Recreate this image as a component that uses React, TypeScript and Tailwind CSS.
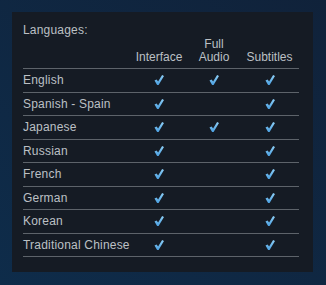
const languages: { name: string; ui: boolean; audio: boolean; subs: boolean }[] = [
  { name: 'English', ui: true, audio: true, subs: true },
  { name: 'Spanish - Spain', ui: true, audio: false, subs: true },
  { name: 'Japanese', ui: true, audio: true, subs: true },
  { name: 'Russian', ui: true, audio: false, subs: true },
  { name: 'French', ui: true, audio: false, subs: true },
  { name: 'German', ui: true, audio: false, subs: true },
  { name: 'Korean', ui: true, audio: false, subs: true },
  { name: 'Traditional Chinese', ui: true, audio: false, subs: true },
]

function Check() {
  return (
    <svg width="10" height="10" viewBox="0 0 10 10" className="block">
      <defs>
        <linearGradient id="chk" x1="0" y1="0" x2="0" y2="1">
          <stop offset="0" stopColor="#8fd0f7" />
          <stop offset="1" stopColor="#4a9fe0" />
        </linearGradient>
      </defs>
      <polygon points="0.5,5.6 2.6,4.6 4.1,6.6 8.1,0 10,0.9 4.6,10 3.1,10" fill="url(#chk)" />
    </svg>
  )
}

export default function App() {
  return (
    <div
      className="w-[326px] h-[285px] bg-gradient-to-tr from-[#0e2c4a] to-[#10223a] p-[12px] pb-[13px]"
      style={{ fontFamily: 'Arial, "Liberation Sans", sans-serif' }}
    >
      <div className="w-[301px] h-[260px] bg-[#151b24] pt-[10px] px-[11px] text-[12px] text-[#bcc0c4]">
        <div className="leading-[16px] tracking-[0.2px]">Languages:</div>
        <div className="grid grid-cols-[107px_58px_52px_59px] w-[276px]">
          <div className="border-b border-[#5d636a]" />
          <div className="border-b border-[#5d636a] flex items-end justify-center leading-[13px] pb-[4px]">Interface</div>
          <div className="border-b border-[#5d636a] flex flex-col items-center justify-end leading-[13px] pb-[4px]">
            <span>Full</span>
            <span>Audio</span>
          </div>
          <div className="border-b border-[#5d636a] flex items-end justify-center leading-[13px] pb-[4px]">Subtitles</div>
          {languages.map((l) => (
            <div key={l.name} className="contents">
              <div className="h-[23.5px] border-b border-[#5d636a] flex items-center leading-[16px] tracking-[0.2px]">{l.name}</div>
              <div className="border-b border-[#5d636a] flex items-center justify-center">{l.ui && <Check />}</div>
              <div className="border-b border-[#5d636a] flex items-center justify-center">{l.audio && <Check />}</div>
              <div className="border-b border-[#5d636a] flex items-center justify-center">{l.subs && <Check />}</div>
            </div>
          ))}
        </div>
      </div>
    </div>
  )
}
